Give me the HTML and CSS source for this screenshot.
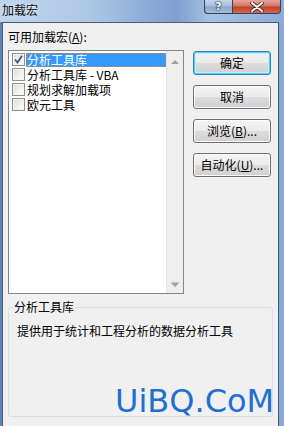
FILE: index.html
```html
<!DOCTYPE html>
<html lang="zh-CN">
<head>
<meta charset="utf-8">
<title>加载宏</title>
<link rel="stylesheet" href="styles.css">
</head>
<body>
<div class="window">
  <div class="titlebar">
    <span class="title">加载宏</span>
    <div class="caption-btns">
      <span class="cbtn help">?</span>
      <span class="cbtn close">
        <svg width="14" height="10" viewBox="0 0 14 10"><path d="M2 1 L12 9 M12 1 L2 9" stroke="#3a2a2a" stroke-width="3.6" stroke-linecap="round"/><path d="M2 1 L12 9 M12 1 L2 9" stroke="#ffffff" stroke-width="2" stroke-linecap="round"/></svg>
      </span>
    </div>
  </div>
  <div class="client">
    <div class="label">可用加载宏(<u>A</u>):</div>
    <div class="main">
      <div class="listbox">
        <ul class="items">
          <li class="item"><span class="chk checked"><svg width="9" height="9" viewBox="0 0 9 9"><path d="M1 4.5 L3.5 7.5 L8 0.8" fill="none" stroke="#3c4f86" stroke-width="1.7"/></svg></span><span class="txt sel">分析工具库</span></li>
          <li class="item"><span class="chk"></span><span class="txt">分析工具库 - VBA</span></li>
          <li class="item"><span class="chk"></span><span class="txt">规划求解加载项</span></li>
          <li class="item"><span class="chk"></span><span class="txt">欧元工具</span></li>
        </ul>
        <div class="vscroll"><span class="arrow up"></span><span class="arrow down"></span></div>
      </div>
      <div class="buttons">
        <button class="btn default">确定</button>
        <button class="btn">取消</button>
        <button class="btn">浏览(<u>B</u>)...</button>
        <button class="btn">自动化(<u>U</u>)...</button>
      </div>
    </div>
    <fieldset class="group">
      <legend class="group-title">分析工具库</legend>
      <p class="desc">提供用于统计和工程分析的数据分析工具</p>
    </fieldset>
  </div>
  <div class="watermark">UiBQ.CoM</div>
</div>
</body>
</html>
```
FILE: styles.css
```css
* { box-sizing: border-box; }
html, body { margin: 0; padding: 0; }
body {
  font-family: "Noto Sans CJK SC", "Noto Sans", sans-serif;
  font-size: 12px;
  color: #000;
  background: #f0f0f0;
}
.window {
  position: relative;
  width: 284px;
  height: 426px;
  overflow: hidden;
  display: flex;
  flex-direction: column;
  background: linear-gradient(90deg, #bfd4ec 0%, #b0c9e6 30%, #8fafd9 50%, #7e9fd0 62%, #a6c1e3 74%, #98b7de 88%, #8badda 100%);
}
.titlebar {
  height: 22px;
  flex: none;
  display: flex;
  justify-content: space-between;
  align-items: flex-start;
}
.title {
  padding-left: 2px;
  margin-top: 2px;
  line-height: 16px;
  font-size: 12px;
  color: #0b0b0b;
  text-shadow: 0 0 4px rgba(255,255,255,0.8);
}
.caption-btns {
  display: flex;
  margin-right: 3px;
}
.cbtn {
  height: 14px;
  display: flex;
  align-items: center;
  justify-content: center;
  border: 1px solid #34435a;
  border-top: none;
}
.help {
  width: 28px;
  border-radius: 0 0 0 4px;
  background: linear-gradient(180deg, #c5d5e9 0%, #a9bfdc 45%, #8aa6cb 55%, #a5bedb 100%);
  color: #fff;
  font-family: "DejaVu Sans", sans-serif;
  font-weight: bold;
  font-size: 11px;
  line-height: 12px;
  text-shadow: 0 0 1px #223, 0 0 1px #223, 0 0 2px #223;
  border-right: none;
}
.close {
  width: 49px;
  border-radius: 0 0 4px 0;
  background: linear-gradient(180deg, #e6a89a 0%, #d47462 45%, #c2432b 55%, #d5674a 100%);
}
.client {
  flex: 1;
  margin: 0 5px 0 2px;
  border: 1px solid #4d5a6c;
  border-bottom: none;
  background: #f0f0f0;
  padding: 7px 0 0 5px;
  box-shadow: -2px 0 0 #5d82ba, 5px 0 0 #86a8d6;
}
.label {
  height: 14px;
  line-height: 14px;
}
u { text-decoration: underline; text-underline-offset: 1px; }
.main {
  display: flex;
  margin-top: 6px;
}
.listbox {
  width: 176px;
  height: 244px;
  border: 1px solid #828790;
  background: #fff;
  display: flex;
}
.items {
  list-style: none;
  margin: 0;
  padding: 1px 0 0 0;
  flex: 1;
}
.item {
  height: 15px;
  display: flex;
  align-items: center;
}
.chk {
  width: 13px;
  height: 13px;
  margin-left: 3px;
  margin-right: 1px;
  border: 1px solid #8e8f8f;
  background: linear-gradient(135deg, #dcdcdc 0%, #f6f6f6 70%, #ffffff 100%);
  box-shadow: inset 0 0 0 1px #f4f4f4;
  display: flex;
  align-items: center;
  justify-content: center;
}
.txt {
  height: 14px;
  line-height: 14px;
  padding-left: 1px;
  white-space: nowrap;
}
.txt.sel {
  flex: 1;
  background: #3399ff;
  color: #fff;
  outline: 1px dotted #d8842a;
  outline-offset: -1px;
}
.vscroll {
  width: 17px;
  background: #eeeeee;
  border-left: 1px solid #e6e6e6;
  display: flex;
  flex-direction: column;
  justify-content: space-between;
  align-items: center;
  padding: 9px 0 6px 0;
}
.arrow {
  width: 0;
  height: 0;
  border-left: 4px solid transparent;
  border-right: 4px solid transparent;
}
.arrow.up { border-bottom: 4px solid #a2a2a2; }
.arrow.down { border-top: 4px solid #a2a2a2; box-shadow: 0 -1px 0 #c8c8c8; }
.buttons {
  display: flex;
  flex-direction: column;
  gap: 10px;
  margin-left: 9px;
  padding-top: 1px;
}
.btn {
  width: 78px;
  height: 24px;
  font-family: inherit;
  font-size: 12px;
  line-height: 14px;
  color: #000;
  border: 1px solid #707070;
  border-radius: 3px;
  background: linear-gradient(180deg, #f4f4f4 0%, #ebebeb 48%, #dddddd 52%, #d0d0d0 100%);
  box-shadow: inset 0 0 0 1px #fcfcfc;
  padding: 0;
}
.btn.default {
  border-color: #3c7fb1;
  box-shadow: inset 0 0 0 1px #48d2fb, inset 0 0 0 2px #c6eefc;
  background: linear-gradient(180deg, #eaf6fd 0%, #d9f0fc 48%, #bee6fd 52%, #a7d9f5 100%);
  background: linear-gradient(180deg, #f2f2f2 0%, #ebebeb 48%, #dddddd 52%, #cfcfcf 100%);
}
.group {
  width: 265px;
  height: 117px;
  margin: 6px 0 0 0;
  padding: 0;
  border: 1px solid #d5dfe5;
  border-radius: 3px;
  min-width: 0;
}
.group-title {
  margin-left: 4px;
  padding: 0 1px;
  line-height: 14px;
  height: 14px;
}
.desc {
  margin: 10px 0 0 8px;
  line-height: 14px;
}
.watermark {
  position: absolute;
  left: 115px;
  top: 385px;
  font-family: "DejaVu Sans", sans-serif;
  font-size: 32px;
  line-height: 32px;
  color: #1f6fd2;
  white-space: nowrap;
}
```
